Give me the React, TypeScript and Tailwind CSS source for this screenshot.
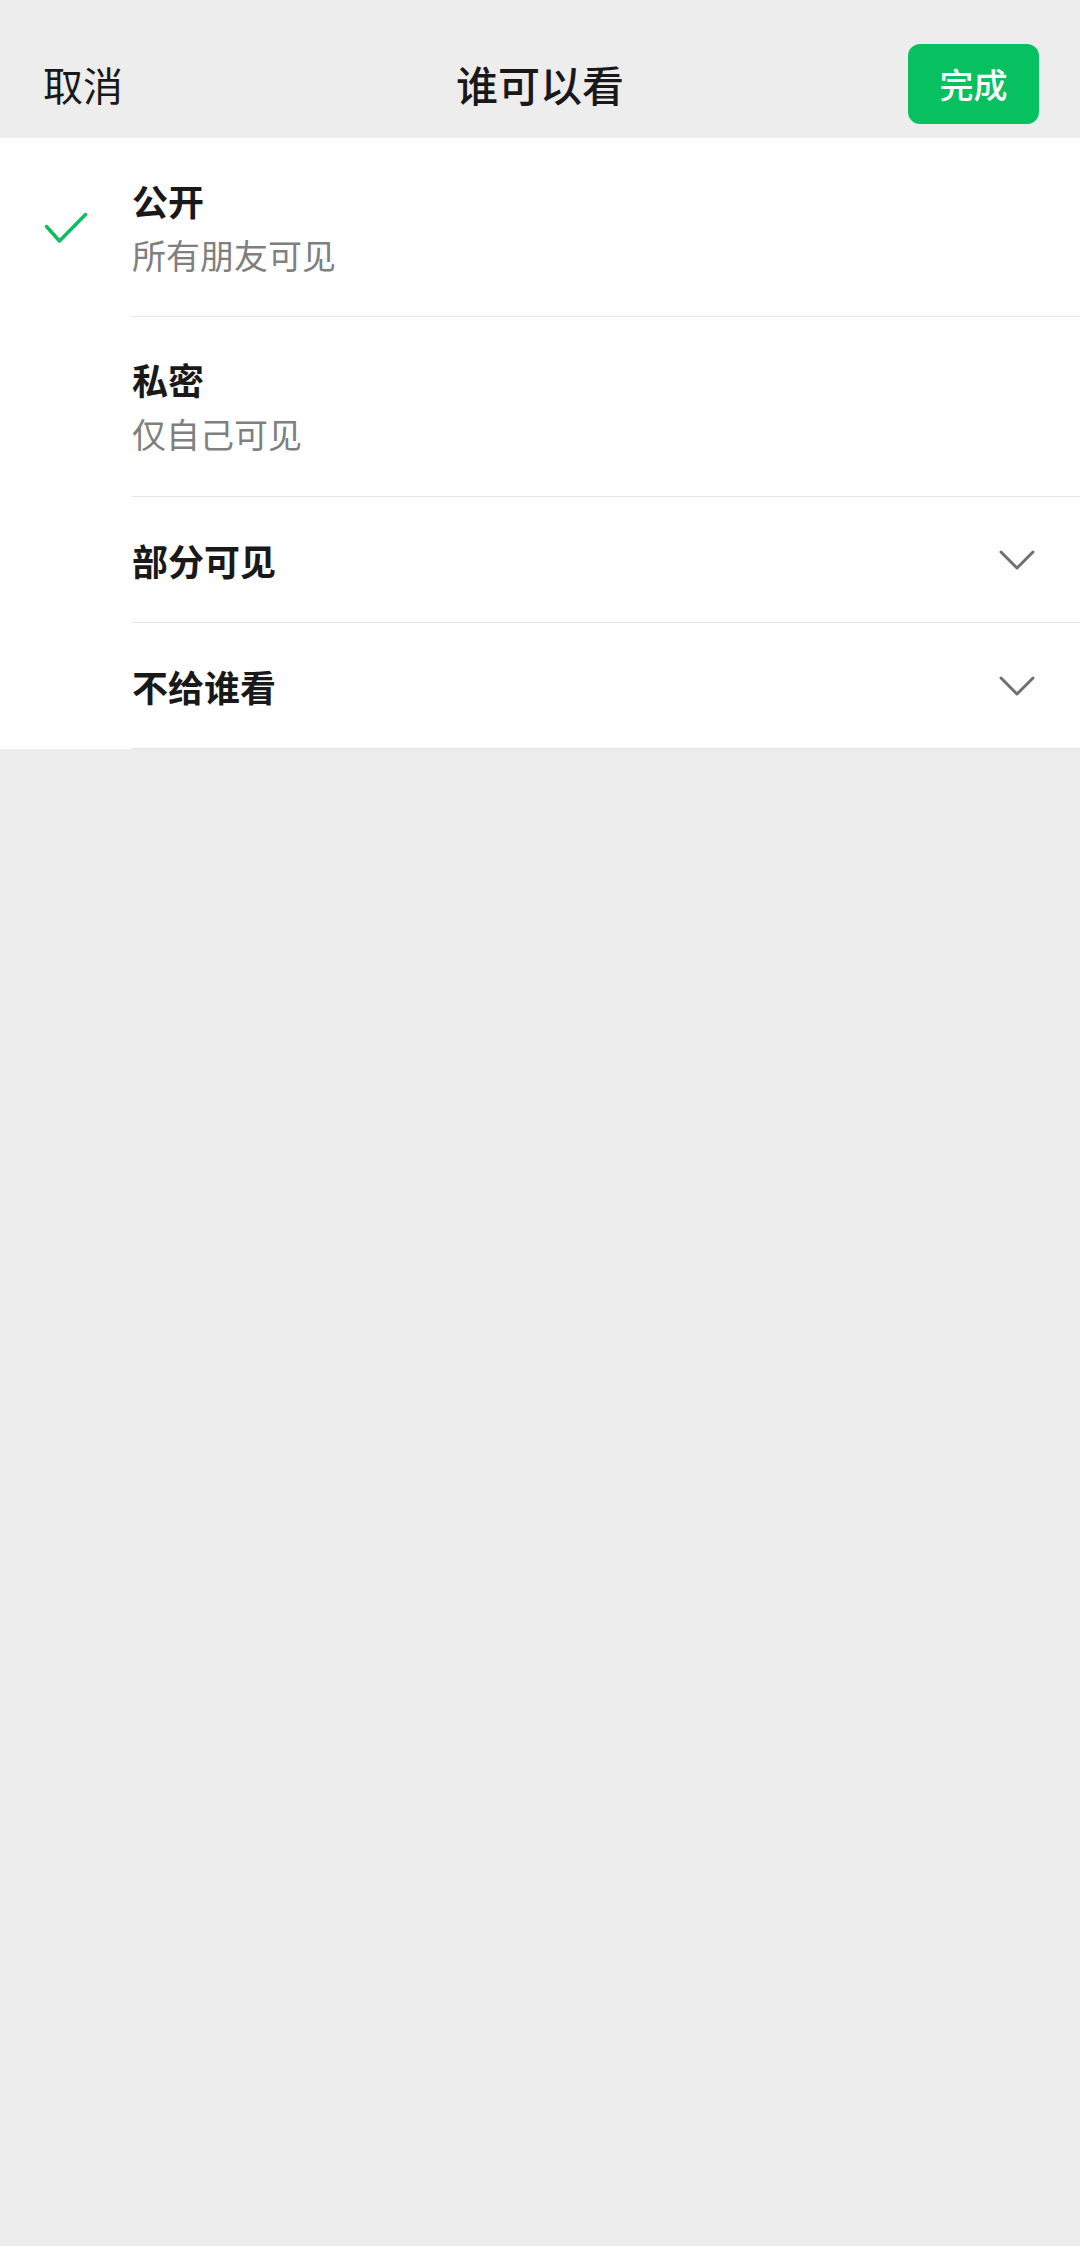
import React from "react";

type Option = {
  title: string;
  subtitle?: string;
  checked?: boolean;
  expandable?: boolean;
};

const options: Option[] = [
  { title: "公开", subtitle: "所有朋友可见", checked: true },
  { title: "私密", subtitle: "仅自己可见" },
  { title: "部分可见", expandable: true },
  { title: "不给谁看", expandable: true },
];

function CheckIcon() {
  return (
    <svg width="44" height="34" viewBox="0 0 44 34" fill="none">
      <polyline
        points="2.5,15.5 15.5,30 41.5,3.5"
        stroke="#07c160"
        strokeWidth="3.5"
        strokeLinecap="round"
        strokeLinejoin="round"
      />
    </svg>
  );
}

function ChevronDown() {
  return (
    <svg width="36" height="20" viewBox="0 0 36 20" fill="none">
      <polyline
        points="2,2 18,18 34,2"
        stroke="#6f6f6f"
        strokeWidth="3"
        strokeLinecap="round"
        strokeLinejoin="round"
      />
    </svg>
  );
}

export default function App() {
  return (
    <div
      className="min-h-[2246px] bg-[#ededed]"
      style={{ fontFamily: '"Noto Sans CJK SC", "Noto Sans", sans-serif' }}
    >
      {/* Header */}
      <div className="grid h-[138px] grid-cols-[1fr_auto_1fr] items-center pt-[29px]">
        <div className="pl-[43px] text-[40px] leading-none text-[#191919]">取消</div>
        <div className="text-[42px] font-medium leading-none text-[#191919]">谁可以看</div>
        <div className="flex justify-end pr-[41px]">
          <button
            type="button"
            className="flex h-[80px] w-[131px] items-center justify-center rounded-[12px] bg-[#07c160] text-[34px] font-medium text-white"
          >
            完成
          </button>
        </div>
      </div>

      {/* Options */}
      <div className="bg-white">
        {options.map((opt, i) => (
          <div
            key={opt.title}
            className={`flex ${opt.subtitle ? (i === 0 ? "h-[179px]" : "h-[180px]") : "h-[126px]"}`}
          >
            <div className="flex w-[132px] shrink-0 items-center justify-center">
              {opt.checked && <CheckIcon />}
            </div>
            <div className="flex flex-1 items-center justify-between border-b border-[#e5e5e5] pr-[45px]">
              <div className="flex flex-col gap-[5px]">
                <div className="text-[36px] font-semibold leading-[50px] text-[#191919]">
                  {opt.title}
                </div>
                {opt.subtitle && (
                  <div className="text-[34px] leading-[50px] text-[#7f7f7f]">{opt.subtitle}</div>
                )}
              </div>
              {opt.expandable && <ChevronDown />}
            </div>
          </div>
        ))}
      </div>
    </div>
  );
}
